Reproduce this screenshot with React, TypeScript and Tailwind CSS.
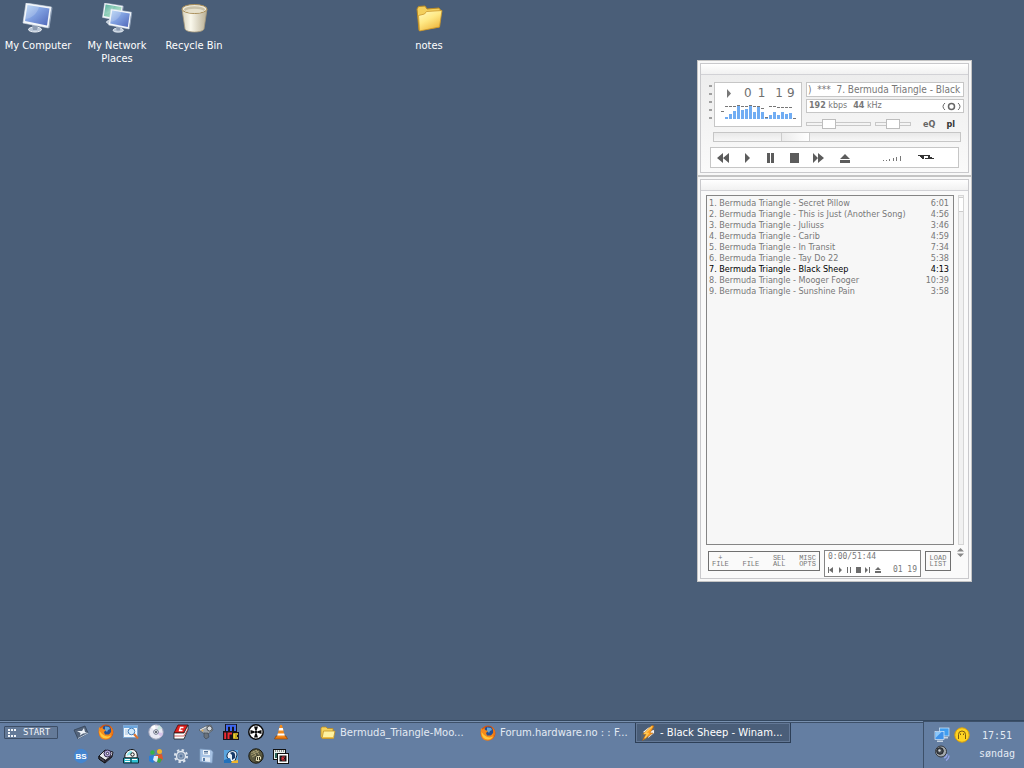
import React, { useState } from 'react';

interface Track {
  title: string;
  time: string;
}

const tracks: Track[] = [
  { title: 'Bermuda Triangle - Secret Pillow', time: '6:01' },
  { title: 'Bermuda Triangle - This is Just (Another Song)', time: '4:56' },
  { title: 'Bermuda Triangle - Juliuss', time: '3:46' },
  { title: 'Bermuda Triangle - Carib', time: '4:59' },
  { title: 'Bermuda Triangle - In Transit', time: '7:34' },
  { title: 'Bermuda Triangle - Tay Do 22', time: '5:38' },
  { title: 'Bermuda Triangle - Black Sheep', time: '4:13' },
  { title: 'Bermuda Triangle - Mooger Fooger', time: '10:39' },
  { title: 'Bermuda Triangle - Sunshine Pain', time: '3:58' },
];

// [bar height, peak height] for each band of the analyser
const bands = [
  [0, 8], [2, 13], [5, 13], [8, 13], [13, 14], [9, 13], [10, 13], [13, 14], [7, 13], [12, 13],
  [7, 11], [1, 2], [4, 13], [7, 13], [4, 12], [7, 12], [5, 12], [6, 12], [0, 1],
];

/* ---------- desktop icons ---------- */

function Monitor({ green = false }: { green?: boolean }) {
  const id = green ? 'screenGreen' : 'screenBlue';
  return (
    <g>
      <defs>
        <linearGradient id={id} x1="0" y1="0" x2="1" y2="1">
          <stop offset="0" stopColor={green ? '#2f9a86' : '#b3d3f4'} />
          <stop offset="0.45" stopColor={green ? '#8fd0b8' : '#7f9fe0'} />
          <stop offset="1" stopColor={green ? '#d5efd0' : '#4f66b8'} />
        </linearGradient>
      </defs>
      <ellipse cx="14" cy="26.5" rx="6.5" ry="2.5" fill="#b9c6d6" stroke="#eef2f7" />
      <path d="M11 22l6 1-1 4h-4z" fill="#8d9cb2" />
      <path d="M5 0L30.5 4 27.500 25 2 20z" fill="#f4f7fa" stroke="#d3dde9" strokeWidth="0.600" />
      <path d="M30.500 4l1 .8L28.500 25l-1 0z" fill="#8fa0b7" />
      <path d="M6.500 2L28.500 5.500 26 22.500 4 18z" fill={`url(#${id})`} />
      <path d="M6.500 2L18 4C16 11 11 15 4.500 16z" fill="#fff" opacity="0.18" />
    </g>
  );
}

function ComputerIcon() {
  return (
    <svg width="32" height="32" viewBox="1 0 32 32" aria-hidden="true">
      <Monitor />
    </svg>
  );
}

function NetworkIcon() {
  return (
    <svg width="32" height="32" viewBox="1 0 32 32" aria-hidden="true">
      <g transform="translate(1 0) scale(.72)">
        <Monitor green />
      </g>
      <g transform="translate(7 6) scale(.8)">
        <Monitor />
      </g>
    </svg>
  );
}

function RecycleIcon() {
  return (
    <svg width="32" height="32" viewBox="0 0 32 32" aria-hidden="true">
      <defs>
        <linearGradient id="bin">
          <stop offset="0" stopColor="#d8d2bd" />
          <stop offset="0.35" stopColor="#faf8ec" />
          <stop offset="1" stopColor="#b8ae93" />
        </linearGradient>
      </defs>
      <path d="M4 6l3 20c1 4 18 4 19 0L29 6z" fill="url(#bin)" stroke="#a89b7c" strokeWidth="0.8" />
      <ellipse cx="16.500" cy="6" rx="12.500" ry="4.500" fill="#eee9d8" stroke="#a88d58" />
      <ellipse cx="16.500" cy="6.500" rx="10.500" ry="3.200" fill="#c9c1a8" />
      <path d="M7 8c4 2.500 15 2.500 19 0-3-3-16-3-19 0z" fill="#e6e0cb" />
    </svg>
  );
}

function FolderIcon() {
  return (
    <svg width="32" height="32" viewBox="0 0 32 32" aria-hidden="true">
      <defs>
        <linearGradient id="folder" x1="0" y1="0" x2="0.6" y2="1">
          <stop offset="0" stopColor="#fffbc4" />
          <stop offset="0.5" stopColor="#ffe985" />
          <stop offset="1" stopColor="#efb840" />
        </linearGradient>
      </defs>
      <path d="M4 6l1.500-2.500L12 3l2 3 12-1 1.500 2-1 17L6 27.500z" fill="#f3cf5c" stroke="#b98a24" />
      <path d="M5.500 12.500l6-1.500 2-2.500L29 7.500 26.500 24 6.500 28z" fill="url(#folder)" stroke="#c9962c" strokeWidth="0.8" />
    </svg>
  );
}

/* ---------- taskbar icons, all on a 16px grid ---------- */

function Icon16({ children }: { children: React.ReactNode }) {
  return (
    <svg width="16" height="16" viewBox="0 0 16 16" className="shrink-0" aria-hidden="true">
      {children}
    </svg>
  );
}

function SmallFolderIcon() {
  return (
    <Icon16>
      <path d="M1 3l1-1h4l1.500 1.500H13V13H2L1 12z" fill="#f5d25c" stroke="#b98a24" strokeWidth="0.8" />
      <path d="M3.500 6H15l-1.500 7.500H2z" fill="#fff2a0" stroke="#c08f22" strokeWidth="0.8" />
      <path d="M3 12.500h10.500" stroke="#efbe45" />
    </Icon16>
  );
}

function FirefoxIcon() {
  return (
    <Icon16>
      <circle cx="8" cy="8" r="7.500" fill="#d9560b" />
      <circle cx="8.500" cy="6.500" r="5" fill="#274f93" />
      <path d="M7 2.500l4 .5 1 2-2 1-1 2-2-2z" fill="#63a5d8" />
      <path d="M1 3l1.500 1.500L4.500 3 5 5l3 1-2 2 1 2.500 4 0 2.500-3L13 3c3 4 2 12-5 12.500C2 16 0 11 1 3z" fill="#f58a1b" />
      <path d="M1.500 7C1.500 11.500 4 14.500 8 14.500c2 0 4-1 5-3-3 1.500-6 1-7.500-.5C4 10 3 9 1.500 7z" fill="#ffc83d" />
      <path d="M12 2l3 4v3l-2 3 .5-5z" fill="#ee7512" />
    </Icon16>
  );
}

function WinampIcon() {
  return (
    <Icon16>
      <path d="M1 9l6-6 5-2 3 2v5l-6 6-5 1.500L1 13z" fill="#5c6470" />
      <path d="M3 7l5-4 2-1-3 7zM8 13l6-5 0-3-4 1z" fill="#f6f6f6" />
      <path d="M12 .5L3 9l3 0-3.500 6.500L13 8h-3L14 1z" fill="#ff9b1c" stroke="#b3620a" strokeWidth="0.5" />
      <path d="M12 1.500L5 8.500h3L5 13" stroke="#ffc653" strokeWidth="1.500" fill="none" />
    </Icon16>
  );
}

const quickLaunch: { name: string; icon: React.ReactNode }[] = [
  {
    name: 'Show Desktop',
    icon: (
      <Icon16>
        <path d="M1 6l11-4 3 7-10 6z" fill="#53637a" stroke="#2f3d50" strokeWidth="0.700" />
        <path d="M4 7l5 0 2-3 1 4 2 1-4 .5-3 2L7.500 9z" fill="#edf2f8" />
        <path d="M5 14.500l10-5.500" stroke="#b9c6d8" />
      </Icon16>
    ),
  },
  { name: 'Firefox', icon: <FirefoxIcon /> },
  {
    name: 'Search',
    icon: (
      <Icon16>
        <rect x="0.500" y="1.500" width="14" height="12" fill="#f2f7fc" stroke="#7fa9d4" />
        <path d="M1 2h13v2H1z" fill="#6ca6de" />
        <path d="M2 6h4M2 8h3M2 10h3" stroke="#9fc0df" />
        <path d="M11 10l4 4.500" stroke="#d9732e" strokeWidth="2.200" />
        <circle cx="8.500" cy="7.500" r="3.300" fill="#cfe8fb" stroke="#477fb8" />
      </Icon16>
    ),
  },
  {
    name: 'CD Player',
    icon: (
      <Icon16>
        <circle cx="8" cy="8" r="7.200" fill="#e9e9f4" stroke="#a5a9bd" />
        <path d="M8 8L3 3a7 7 0 0 1 4-2z" fill="#fff" />
        <path d="M8 8l5 5a7 7 0 0 0 2-4z" fill="#d7c4ea" />
        <path d="M8 8l6-4-3-3z" fill="#c9e6e2" />
        <circle cx="8" cy="8" r="2.300" fill="#fff" stroke="#666d85" />
        <circle cx="8" cy="8" r="1" fill="#303848" />
      </Icon16>
    ),
  },
  {
    name: 'Dictionary',
    icon: (
      <Icon16>
        <path d="M5 1h10l-4 8H1z" fill="#e0201e" stroke="#4a0808" strokeWidth="0.8" />
        <path d="M1 9h10l4-8v4.500L11 15H1z" fill="#fff" stroke="#1c1c1c" strokeWidth="0.8" />
        <path d="M1 12h10l4-7" stroke="#b33" strokeWidth="0.8" fill="none" />
        <path d="M10.500 3.500H7.500L6.500 6.500h3" stroke="#fff" strokeWidth="1.3" fill="none" />
      </Icon16>
    ),
  },
  {
    name: 'Tools',
    icon: (
      <Icon16>
        <path d="M1 6l7-4 5-1 2 5-5 4-5-1z" fill="#9ba2a8" stroke="#4e565f" strokeWidth="0.700" />
        <path d="M6 9l4 0 1 4-3 2-2-2z" fill="#69727c" stroke="#3b434d" strokeWidth="0.600" />
        <circle cx="11.500" cy="4.500" r="2.500" fill="#d5d9dc" stroke="#4f555c" />
        <path d="M2 6l6-3" stroke="#e9edef" />
        <circle cx="4.500" cy="6.500" r="1" fill="#e2ae56" />
      </Icon16>
    ),
  },
  {
    name: 'mIRC',
    icon: (
      <Icon16>
        <path d="M2 0h12v8h2v8H0V7h2z" fill="#16131c" />
        <path d="M4 7V1.800h8V7M8 2v5" stroke="#3f68ee" strokeWidth="2" fill="none" />
        <path d="M2.200 8.500V15M5.500 15V9.500h3.500" stroke="#ee2a32" strokeWidth="2" fill="none" />
        <path d="M15 10h-4v4h4M11 12h3" stroke="#f7d72a" strokeWidth="1.700" fill="none" />
      </Icon16>
    ),
  },
  {
    name: 'Media Reel',
    icon: (
      <Icon16>
        <circle cx="8" cy="8" r="7.200" fill="#fff" stroke="#0a0a0a" strokeWidth="1.500" />
        <path d="M6 2.500h4L8.700 6.500H7.300zM6 13.500h4L8.700 9.500H7.300zM2.500 6v4l4-1.300V7.300zM13.500 6v4l-4-1.300V7.300z" fill="#0a0a0a" />
        <circle cx="8" cy="8" r="1.500" fill="#0a0a0a" />
      </Icon16>
    ),
  },
  {
    name: 'VLC',
    icon: (
      <Icon16>
        <path d="M3 12h10l1.500 3h-13z" fill="#e87912" stroke="#7c3c06" strokeWidth="0.6" />
        <path d="M7 1h2l3 12H4z" fill="#f28a1c" />
        <path d="M6.200 4h3.600l.6 2.500H5.600zM4.800 9.500h6.400l.5 2H4.300z" fill="#fff" />
      </Icon16>
    ),
  },
  {
    name: 'BSPlayer',
    icon: (
      <Icon16>
        <circle cx="8" cy="8" r="7.200" fill="#4585cf" />
        <text x="8" y="11" textAnchor="middle" fontSize="8" fontWeight="bold" fontFamily="Liberation Sans, sans-serif" fill="#fff">
          BS
        </text>
      </Icon16>
    ),
  },
  {
    name: 'Disk Tool',
    icon: (
      <Icon16>
        <path d="M1 8l6-6 8 2-1 5-7 6-6-4z" fill="#e9e9ee" stroke="#191922" />
        <circle cx="9.500" cy="5.500" r="3.500" fill="#b7a9dc" stroke="#2c2644" />
        <circle cx="9.500" cy="5.500" r="1.200" fill="#fff" stroke="#2c2644" />
        <path d="M1 8l6 4v3l-6-4z" fill="#4a4658" stroke="#111" />
        <path d="M7 12l7-5v2l-7 6z" fill="#24222e" />
      </Icon16>
    ),
  },
  {
    name: 'Disc Burner',
    icon: (
      <Icon16>
        <path d="M2 10C1 5 5 1.500 9 1.500S15 6 14 10z" fill="#f4f4f4" stroke="#111" />
        <path d="M3.500 8C4 5 6 3 9 3L9 6z" fill="#8ce3ea" />
        <circle cx="9.500" cy="6.500" r="1.700" fill="#fff" stroke="#111" />
        <path d="M0.500 10h15v5H.5z" fill="#2fc0d2" stroke="#0a2c35" />
        <path d="M2 11h5v1H2zM2 13h5v1H2zM9 11h5v1H9z" fill="#fff" />
        <path d="M8 10v5" stroke="#0a2c35" />
      </Icon16>
    ),
  },
  {
    name: 'Messenger',
    icon: (
      <Icon16>
        <circle cx="4.500" cy="4.500" r="2.200" fill="#37b34a" />
        <circle cx="11.500" cy="3.500" r="2.500" fill="#f2b32b" />
        <path d="M1 8l5-1 2 3-3 5-4-2z" fill="#2b7fd6" />
        <path d="M8 7l6-1 1 5-4 4-3-4z" fill="#e0552a" />
        <path d="M6 8l4 0 0 5-2 1-3-2z" fill="#e3ebf5" />
        <path d="M10 10l4 1-2 4-3-1z" fill="#39a845" />
      </Icon16>
    ),
  },
  {
    name: 'Settings',
    icon: (
      <Icon16>
        <circle cx="8" cy="8" r="6" fill="none" stroke="#dbe3ed" strokeWidth="2.200" strokeDasharray="2.350 2.350" />
        <circle cx="8" cy="8" r="4.500" fill="#788fae" stroke="#e2e8f0" strokeWidth="1.300" />
        <circle cx="8" cy="8" r="2" fill="#5d789d" stroke="#aebed1" strokeWidth="0.700" />
      </Icon16>
    ),
  },
  {
    name: 'Save',
    icon: (
      <Icon16>
        <path d="M2 1l11 1 2 2-1 11-12-1.500z" fill="#a6c2e4" stroke="#7f9dc2" strokeWidth="0.7" />
        <path d="M5 2l7 .5V7L5 6.500z" fill="#f3f7fb" />
        <path d="M6 3.500h4M6 5h4" stroke="#54749b" />
        <path d="M4 9l8 .5V14L4 13z" fill="#e3ecf6" />
        <path d="M5 10h2v3H5z" fill="#597da9" />
      </Icon16>
    ),
  },
  {
    name: 'Globe',
    icon: (
      <Icon16>
        <rect x="1" y="2" width="14" height="13" fill="#5aa5df" />
        <path d="M4 9C3 2 14 0 14 7l-2 6-4 1z" fill="#eaf4fb" stroke="#132747" />
        <path d="M7 5c4-3 6 1 5 5l-3 2V7z" fill="#173b69" />
        <path d="M1 12l6-2 2 5H1z" fill="#2271bb" />
        <path d="M9 13l6-1v3H8z" fill="#f0b52e" />
      </Icon16>
    ),
  },
  {
    name: 'Capture',
    icon: (
      <Icon16>
        <circle cx="8" cy="8" r="7.200" fill="#5b5940" stroke="#17170e" />
        <path d="M3 5l6-3M3 7l8-4M4 9l4-2M5 3l4 6M8 2l4 6" stroke="#b5ab7b" strokeWidth="0.8" />
        <path d="M8 8l4-1 2 3-3 4-4-1z" fill="#e6dfb7" stroke="#242414" strokeWidth="0.8" />
        <path d="M9.500 9v3M11.500 9v3" stroke="#332" />
      </Icon16>
    ),
  },
  {
    name: 'Windows',
    icon: (
      <Icon16>
        <rect x="0.500" y="1.500" width="12" height="10" fill="#e9f1ec" stroke="#111" />
        <path d="M2 3h9" stroke="#333" strokeDasharray="1 1" />
        <path d="M2 5h9v5H2z" fill="#2a6257" />
        <rect x="4.500" y="5.500" width="11" height="10" fill="#fff" stroke="#111" />
        <rect x="6.500" y="7.500" width="7" height="6" fill="#171717" />
        <path d="M12 9H9v3h3M9 10.500h2" stroke="#e12f3b" fill="none" />
      </Icon16>
    ),
  },
];

/* ---------- desktop ---------- */

interface ShortcutProps {
  label: string;
  className: string;
  children: React.ReactNode;
}

function Shortcut({ label, className, children }: ShortcutProps) {
  return (
    <button className={`absolute top-[3px] flex w-[76px] flex-col items-center gap-1 text-[11px] leading-[13px] text-white ${className}`}>
      {children}
      <span>{label}</span>
    </button>
  );
}

/* ---------- player ---------- */

function Panel({ label, children }: { label: string; children: React.ReactNode }) {
  return (
    <section aria-label={label} className="border border-[#c4c4c4] bg-[#f8f8f8] p-[2px]">
      <div className="border border-[#c9c9cc] bg-gradient-to-b from-[#ececec] to-[#fafafa]">
        <div className="h-[11px] border-b border-[#d2d2d6] bg-gradient-to-b from-white to-[#f1f1f1]" />
        {children}
      </div>
    </section>
  );
}

function Analyser() {
  return (
    <svg width="76" height="16" viewBox="0 0 76 16" shapeRendering="crispEdges" aria-hidden="true">
      {bands.map(([bar, peak], i) => (
        <g key={i}>
          <rect x={i * 4} y={15 - bar} width="3" height={bar} fill="#71adf3" />
          <rect x={i * 4} y={15 - peak} width="3" height="1" fill="#777" />
        </g>
      ))}
    </svg>
  );
}

const transport = [
  { name: 'Previous', d: 'M6 0v10L0 5zM12 0v10L6 5z' },
  { name: 'Play', d: 'M4 0l5 5-5 5z' },
  { name: 'Pause', d: 'M2 0h3v10H2zM6 0h3v10H6z' },
  { name: 'Stop', d: 'M1 0h9v10H1z' },
  { name: 'Next', d: 'M0 0l5 5-5 5zM5 0l6 5-6 5z' },
];

const slider =
  'appearance-none bg-transparent [&::-webkit-slider-runnable-track]:h-[4px] [&::-webkit-slider-runnable-track]:border [&::-webkit-slider-runnable-track]:border-[#c8c8c8] [&::-webkit-slider-thumb]:-mt-[4px] [&::-webkit-slider-thumb]:h-[10px] [&::-webkit-slider-thumb]:w-[14px] [&::-webkit-slider-thumb]:appearance-none [&::-webkit-slider-thumb]:border [&::-webkit-slider-thumb]:border-[#bdbdbd] [&::-webkit-slider-thumb]:bg-white';

function MainPanel() {
  const [volume, setVolume] = useState(31);
  const [balance, setBalance] = useState(50);
  const [position, setPosition] = useState(31);

  return (
    <Panel label="Winamp">
      <div className="pt-[7px] pb-1">
        <div className="flex pl-2">
          <div className="flex flex-col gap-[6px] pt-[3px]">
            {[0, 1, 2, 3, 4].map((n) => (
              <span key={n} className="h-[2px] w-[3px] bg-[#a0a0a0]" />
            ))}
          </div>
          <div className="ml-[2px] h-[45px] w-[88px] border border-[#c6c6c6] bg-white pl-[6px]">
            <div className="mt-[3px] flex h-[14px] items-center font-['DejaVu_Sans'] text-[12px] leading-[14px] text-[#6f6f6f]">
              <svg width="6" height="9" viewBox="0 0 6 9" className="ml-[5px]" aria-hidden="true">
                <path d="M1 0l4 4.500L1 9z" fill="#777" />
              </svg>
              <span className="ml-[12px]">0</span>
              <span className="ml-[6px]">1</span>
              <span className="ml-[10px]">1</span>
              <span className="ml-[4px]">9</span>
            </div>
            <div className="mt-1">
              <Analyser />
            </div>
          </div>
          <div className="ml-1 flex w-[158px] flex-col">
            <div className="h-[15px] overflow-hidden border border-[#c6c6c6] bg-white pl-[1px] text-[10px] leading-[13px] whitespace-pre text-[#777]">
              {')  ***  7. Bermuda Triangle - Black'}
            </div>
            <div className="mt-[2px] flex h-[14px] items-center border border-[#c6c6c6] bg-white px-[2px] font-['DejaVu_Sans'] text-[8px] leading-[10px] text-[#777]">
              <span><b>192</b> kbps</span>
              <span className="ml-[6px]"><b>44</b> kHz</span>
              <svg width="19" height="9" viewBox="0 0 19 9" className="ml-auto" fill="none" stroke="#666" aria-hidden="true">
                <path d="M3 1Q-1 4.500 3 8M16 1q4 3.500 0 7" />
                <circle cx="9.500" cy="4.500" r="3" strokeWidth="1.500" />
              </svg>
            </div>
            <div className="mt-1 flex h-[14px] items-center text-[9px] leading-[12px] font-bold">
              <input type="range" aria-label="Volume" value={volume} onChange={(e) => setVolume(Number(e.target.value))} className={`w-[65px] ${slider}`} />
              <input type="range" aria-label="Balance" value={balance} onChange={(e) => setBalance(Number(e.target.value))} className={`ml-1 w-[36px] ${slider}`} />
              <button className="ml-3 text-[#666]">eQ</button>
              <button className="ml-[11px] text-[#333]">pl</button>
            </div>
          </div>
        </div>
        <input
          type="range"
          aria-label="Position"
          value={position}
          onChange={(e) => setPosition(Number(e.target.value))}
          className="mt-px ml-3 block h-[10px] w-[248px] appearance-none border border-[#c6c6c6] bg-gradient-to-b from-[#e9e9e9] to-[#f7f7f7] [&::-webkit-slider-thumb]:h-[8px] [&::-webkit-slider-thumb]:w-[29px] [&::-webkit-slider-thumb]:appearance-none [&::-webkit-slider-thumb]:border-x [&::-webkit-slider-thumb]:border-[#ccc] [&::-webkit-slider-thumb]:bg-gradient-to-r [&::-webkit-slider-thumb]:from-[#ececec] [&::-webkit-slider-thumb]:to-white"
        />
        <div className="mt-[5px] ml-[9px] flex h-[21px] w-[249px] items-center border border-[#c6c6c6] bg-white">
          {transport.map((item) => (
            <button key={item.name} aria-label={item.name} className="flex w-6 justify-center">
              <svg width="12" height="10" viewBox="0 0 12 10" fill="#5c5c5c" aria-hidden="true">
                <path d={item.d} />
              </svg>
            </button>
          ))}
          <button aria-label="Eject" className="ml-2">
            <svg width="12" height="10" viewBox="0 0 12 10" fill="#5c5c5c" aria-hidden="true">
              <path d="M6 1l5 5H1zM1 7h10v3H1z" />
            </svg>
          </button>
          <button aria-label="Shuffle" className="ml-8">
            <svg width="19" height="6" viewBox="0 0 19 6" fill="#777" shapeRendering="crispEdges" aria-hidden="true">
              <path d="M0 5h1v1H0zM3 5h1v1H3zM6 4h1v2H6zM10 3h1v3h-1zM13 2h1v4h-1zM17 1h1v5h-1z" />
            </svg>
          </button>
          <button aria-label="Repeat" className="ml-4">
            <svg width="17" height="5" viewBox="0 0 17 5" fill="#333" shapeRendering="crispEdges" aria-hidden="true">
              <path d="M0 0h12v1H0zM2 1h4v1H2zM3 2h3v1H3zM4 3h2v1H4zM7 3h9v1H7zM10 2h4v1h-4zM10 1h2v1h-2z" />
            </svg>
          </button>
        </div>
      </div>
    </Panel>
  );
}

const editButtons = [
  ['+', 'FILE'],
  ['−', 'FILE'],
  ['SEL', 'ALL'],
  ['MISC', 'OPTS'],
];

function PlaylistPanel() {
  const [current, setCurrent] = useState(6);

  return (
    <Panel label="Winamp Playlist">
      <div className="bg-[#fafafa] pt-1 pb-px pl-[5px]">
        <div className="flex gap-1">
          <div className="h-[350px] w-[248px] border border-[#858585] bg-[#f7f7f7] px-[2px] pt-[2px]">
            <table className="w-full border-collapse text-[9px] leading-[11px]">
              <tbody>
                {tracks.map((track, i) => (
                  <tr
                    key={track.title}
                    onDoubleClick={() => setCurrent(i)}
                    className={i === current ? 'text-black' : 'text-[#777]'}
                  >
                    <td className="p-0 whitespace-nowrap">{i + 1}. {track.title}</td>
                    <td className="p-0 pr-[2px] text-right">{track.time}</td>
                  </tr>
                ))}
              </tbody>
            </table>
          </div>
          <div className="w-[6px] border border-[#d6d6d6] bg-[#f1f1f1] pt-px">
            <div className="h-[15px] border-y border-[#ccc] bg-white" />
          </div>
        </div>
        <div className="mt-[5px] flex h-[27px] items-start pl-[2px] font-['Liberation_Mono'] text-[7px] leading-[6px] text-[#777]">
          <div className="mt-px flex h-5 w-[112px] items-center justify-between border border-[#707070] px-[3px]">
            {editButtons.map(([top, bottom], i) => (
              <button key={i} className="flex flex-col items-center">
                <span>{top}</span>
                <span>{bottom}</span>
              </button>
            ))}
          </div>
          <div className="ml-1 h-[27px] w-[97px] border border-[#858585] bg-white px-[3px] pt-[1px] font-['DejaVu_Sans_Mono'] text-[8px] leading-[10px]">
            <div>0:00/51:44</div>
            <div className="mt-[3px] flex items-center justify-between">
              <svg width="54" height="6" viewBox="0 0 54 6" fill="#6c6c6c" aria-hidden="true">
                <path d="M0 0h1v6H0zM5 0v6L1 3zM11 0l3 3-3 3zM19 0h1v6h-1zM22 0h1v6h-1zM28 0h5v6h-5zM37 0l3 3-3 3zM41 0h1v6h-1zM50 0l3 3h-6zM47 4h6v2h-6z" />
              </svg>
              <span>01 19</span>
            </div>
          </div>
          <button className="mt-px ml-1 flex h-5 w-[26px] flex-col items-center justify-center border border-[#707070]">
            <span>LOAD</span>
            <span>LIST</span>
          </button>
          <button aria-label="Scroll playlist" className="ml-[6px] flex h-1 items-center">
            <svg width="7" height="9" viewBox="0 0 7 9" fill="#888" aria-hidden="true">
              <path d="M3.500 0L7 3.500H0zM0 5.500h7L3.500 9z" />
            </svg>
          </button>
        </div>
      </div>
    </Panel>
  );
}

/* ---------- taskbar ---------- */

const tasks = [
  { label: 'Bermuda_Triangle-Moo...', icon: <SmallFolderIcon />, active: false },
  { label: 'Forum.hardware.no : : F...', icon: <FirefoxIcon />, active: false },
  { label: '- Black Sheep - Winam...', icon: <WinampIcon />, active: true },
];

function Taskbar() {
  return (
    <footer className="flex h-12 border-t border-[#33475f] bg-[#647ea2] font-['DejaVu_Sans'] text-[10px] text-[#e3eaf3]">
      <div className="flex flex-1 border-t border-[#7890af]">
        <div className="flex flex-1 border-t border-[#3d5069]">
          <button className="mt-[3px] ml-1 flex h-[13px] w-[54px] items-center gap-[6px] rounded-[1px] border border-[#3d4e66] bg-[#647a98] pl-[3px] font-['DejaVu_Sans_Mono'] text-[9px] leading-[11px] text-[#f2f5f9]">
            <svg width="9" height="8" viewBox="0 0 9 8" fill="#f2f5f9" shapeRendering="crispEdges" aria-hidden="true">
              <path d="M0 0h2v2H0zM3 0h2v2H3zM6 0h2v2H6zM0 3h2v2H0zM0 6h2v2H0zM3 6h2v2H3zM6 6h2v2H6z" />
            </svg>
            START
          </button>
          <nav aria-label="Quick Launch" className="ml-[10px] grid w-[225px] grid-cols-9 grid-rows-[24px_24px] pt-px">
            {quickLaunch.map((item) => (
              <button key={item.name} aria-label={item.name} className="flex h-4 justify-center">
                {item.icon}
              </button>
            ))}
          </nav>
          <div className="ml-[22px] flex gap-1">
            {tasks.map((task) => (
              <button
                key={task.label}
                className={`flex h-5 w-[156px] items-center gap-1 border border-t-0 pl-[4px] ${
                  task.active ? 'border-[#2d3f57] bg-[#4a5e79] text-white inset-ring inset-ring-[#637896]' : 'border-transparent'
                }`}
              >
                {task.icon}
                <span className="whitespace-nowrap">{task.label}</span>
              </button>
            ))}
          </div>
        </div>
      </div>
      <div className="flex w-[101px] border-t border-l border-[#3d5069] pt-[5px] pl-[10px]">
        <div className="grid w-[36px] grid-cols-2 content-start gap-x-[3px] gap-y-[2px]">
          <Icon16>
            <rect x="5.500" y="1" width="9.500" height="8" fill="#3f9df0" stroke="#d9eafa" strokeWidth="0.7" />
            <path d="M9 10h5v1.500H9z" fill="#c7d3e0" />
            <rect x="1" y="4.500" width="9" height="8" fill="#3f92ea" stroke="#d9eafa" strokeWidth="0.7" />
            <path d="M1.500 5h6l-6 6z" fill="#8ec8fa" />
            <path d="M3 13.500h6V15H3z" fill="#c7d3e0" />
          </Icon16>
          <Icon16>
            <circle cx="8" cy="8" r="7.200" fill="#ffd322" stroke="#d89e0c" />
            <path d="M4.500 12V7.500a3.500 3.500 0 0 1 7 0V12M6.500 8v-1.500M9.500 8v-1.500" fill="none" stroke="#7a5a10" />
          </Icon16>
          <Icon16>
            <circle cx="7" cy="6.500" r="5.500" fill="#a3a8ad" stroke="#34383e" />
            <circle cx="6" cy="6" r="3.300" fill="#42474e" stroke="#1f2226" />
            <circle cx="5.500" cy="5.500" r="1.200" fill="#d4d7da" />
            <path d="M10 13q3-1 3-4M12 15.500q3-2 3-5" stroke="#96a3e8" strokeWidth="1.300" fill="none" />
          </Icon16>
        </div>
        <div className="flex flex-1 flex-col items-center gap-[6px] pt-[3px] font-['DejaVu_Sans_Mono'] leading-[12px]">
          <time>17:51</time>
          <span>søndag</span>
        </div>
      </div>
    </footer>
  );
}

export default function App() {
  return (
    <div className="flex min-h-screen flex-col bg-[#4a5e78] font-['DejaVu_Sans_Condensed','DejaVu_Sans',sans-serif]">
      <main className="relative flex-1">
        <Shortcut label="My Computer" className="left-0">
          <ComputerIcon />
        </Shortcut>
        <Shortcut label="My Network Places" className="left-[79px]">
          <NetworkIcon />
        </Shortcut>
        <Shortcut label="Recycle Bin" className="left-[156px]">
          <RecycleIcon />
        </Shortcut>
        <Shortcut label="notes" className="left-[391px]">
          <FolderIcon />
        </Shortcut>
        <div className="absolute top-[60px] left-[697px] w-[275px]">
          <MainPanel />
          <PlaylistPanel />
        </div>
      </main>
      <Taskbar />
    </div>
  );
}
